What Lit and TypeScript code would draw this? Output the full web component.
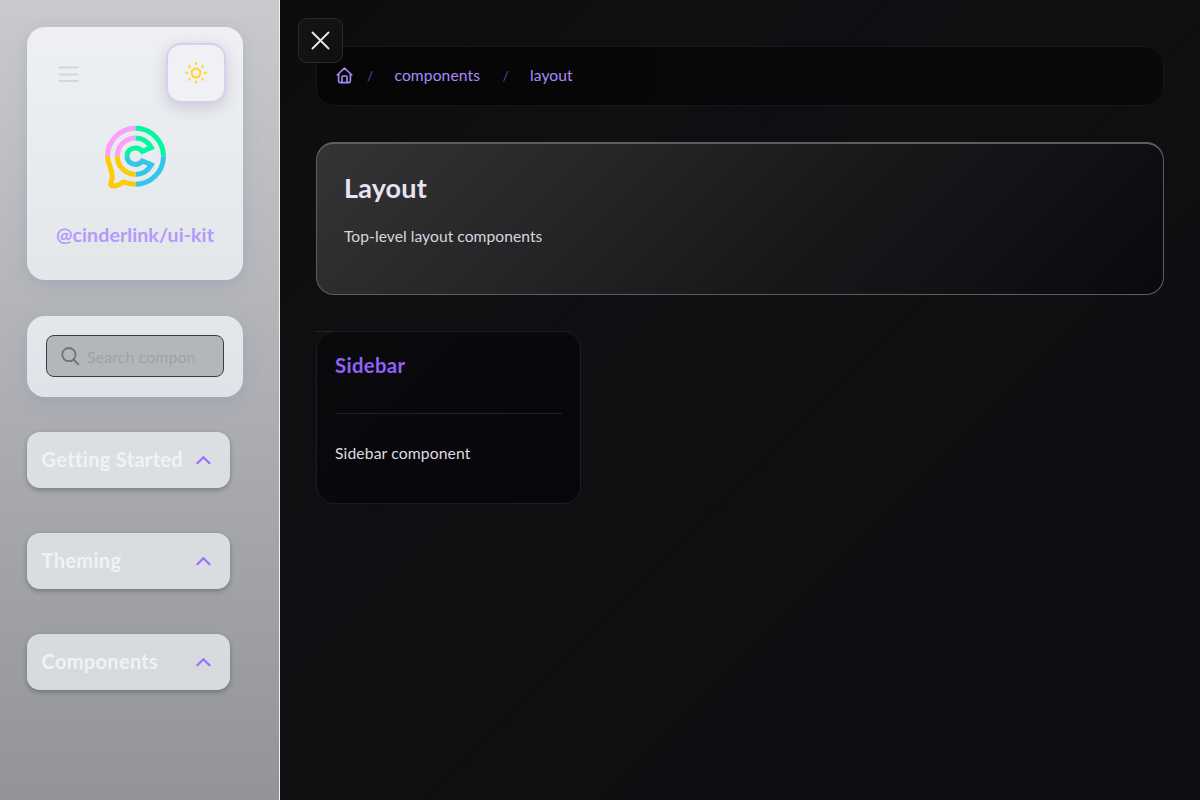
import { LitElement, html, css, svg } from "lit";
import { customElement } from "lit/decorators.js";

@customElement("nav-section")
class NavSection extends LitElement {
  static styles = css`
    :host {
      display: block;
    }
    .section {
      display: flex;
      align-items: center;
      justify-content: space-between;
      box-sizing: border-box;
      width: 203px;
      height: 56px;
      padding: 0 18px 2px 14.6px;
      border-radius: 13px;
      background: rgba(243, 247, 251, 0.68);
      box-shadow: 0 2px 5px rgba(0, 0, 0, 0.28);
    }
    .label {
      font: 700 20px/28px Lato, sans-serif;
      font-variant-ligatures: none;
      letter-spacing: 0.32px;
      color: #f1f2f5;
      white-space: nowrap;
    }
    .chevron {
      display: block;
      flex: none;
      margin-top: 2px;
    }
  `;

  render() {
    return html`<div class="section">
      <span class="label"><slot></slot></span>
      <svg class="chevron" width="17" height="16" viewBox="0 0 17 16" fill="none" stroke="#9a70fb" stroke-width="2.2" stroke-linecap="round">
        <path d="M2.3 11.2 8.4 5.2 14.5 11.2" />
      </svg>
    </div>`;
  }
}

@customElement("app-root")
class AppRoot extends LitElement {
  static styles = css`
    :host {
      display: block;
      height: 800px;
      font-family: Lato, sans-serif;
      font-variant-ligatures: none;
    }
    .page {
      display: flex;
      height: 800px;
      overflow: hidden;
    }
    .side {
      box-sizing: border-box;
      width: 280px;
      flex: none;
      padding: 27px 0 0 27px;
      border-right: 1px solid #f0f0f3;
      background: linear-gradient(180deg, #c9cacd 0%, #b3b4b8 40%, #a0a1a5 75%, #939498 100%);
    }
    .brand {
      display: flex;
      flex-direction: column;
      align-items: center;
      box-sizing: border-box;
      width: 216px;
      height: 253px;
      padding-top: 16px;
      border-radius: 18px;
      background: linear-gradient(180deg, #eef0f4, #e3e7ea);
      box-shadow: 0 5px 16px rgba(125, 140, 175, 0.3);
    }
    .tools {
      display: flex;
      justify-content: space-between;
      align-self: stretch;
      padding: 0 17px 0 31px;
    }
    .menu {
      margin-top: 22px;
    }
    .theme {
      display: grid;
      place-items: center;
      box-sizing: border-box;
      width: 60px;
      height: 60px;
      border: 2px solid #dccdf0;
      border-radius: 15px;
      background: #f0f1f5;
      box-shadow: 0 5px 16px rgba(90, 95, 120, 0.24);
    }
    .logo {
      margin-top: 21px;
    }
    .name {
      margin-top: 31px;
      font-weight: 700;
      font-size: 19.6px;
      line-height: 28px;
      letter-spacing: 0.06px;
      color: #b39afb;
      white-space: nowrap;
    }
    .search {
      box-sizing: border-box;
      width: 216px;
      height: 81px;
      margin-top: 36px;
      padding: 19px;
      border-radius: 18px;
      background: linear-gradient(180deg, #e4e8eb, #dfe3e8);
      box-shadow: 0 5px 16px rgba(125, 140, 175, 0.3);
    }
    .field {
      display: flex;
      align-items: center;
      gap: 7px;
      box-sizing: border-box;
      width: 178px;
      height: 42px;
      padding-left: 14px;
      border: 1px solid #333e4f;
      border-radius: 8px;
      background: #b3b7b9;
      font-size: 15.8px;
      letter-spacing: 0.16px;
      color: #9ca2ac;
      white-space: nowrap;
    }
    .sections {
      display: flex;
      flex-direction: column;
      gap: 45px;
      margin-top: 35px;
    }
    .main {
      position: relative;
      box-sizing: border-box;
      flex: 1;
      padding: 46px 36px 0 36px;
      background: linear-gradient(135deg, #0c0c0c 0%, #0f0f10 18%, #100e12 35%, #0f0f10 55%, #100d12 75%, #0e0e12 100%);
    }
    .close {
      position: absolute;
      left: 18px;
      top: 18px;
      display: flex;
      box-sizing: border-box;
      width: 45px;
      height: 45px;
      padding: 11px;
      border: 1px solid #2a2a2a;
      border-radius: 9px;
      background: linear-gradient(135deg, #151515, #0f0f0f);
    }
    .crumbs {
      display: flex;
      align-items: center;
      box-sizing: border-box;
      height: 60px;
      padding: 0 0 2px 19px;
      border: 1px solid #151517;
      border-radius: 18px;
      background: linear-gradient(100deg, #050505, #09080b 80%);
      font-size: 15.6px;
      letter-spacing: 0.12px;
      color: #a78bfa;
    }
    .slash {
      font-size: 14px;
      color: #5e479d;
    }
    .slash-a {
      margin: 0 21px 0 14px;
    }
    .slash-b {
      margin: 0 21px 0 22.4px;
    }
    .hero {
      box-sizing: border-box;
      height: 153px;
      margin-top: 36px;
      padding: 28px 27px;
      border: 1px solid #5e5e60;
      border-top-width: 2px;
      border-radius: 18px;
      background: linear-gradient(135deg, #343434 0%, #252527 32%, #17171a 60%, #121014 80%, #0b0810 100%);
    }
    .title {
      margin: 0;
      font-weight: 700;
      font-size: 27px;
      line-height: 32px;
      letter-spacing: 0.15px;
      color: #e9e2f2;
    }
    .lead {
      margin: 20px 0 0;
      font-size: 15.6px;
      line-height: 24px;
      letter-spacing: 0.06px;
      color: #d9d5de;
    }
    .list {
      width: 265px;
      margin-top: 36px;
      background: linear-gradient(90deg, #262629, #131316) top / 100% 1px no-repeat;
    }
    .card {
      box-sizing: border-box;
      width: 265px;
      height: 173px;
      padding: 19px 18px 0;
      border: 1px solid #1d1c22;
      border-radius: 18px;
      background: linear-gradient(135deg, #0a0a0b, #09070d 50%, #08060c);
    }
    .card-title {
      margin: 0;
      padding-bottom: 34px;
      border-bottom: 1px solid #222126;
      font-weight: 700;
      font-size: 20.3px;
      line-height: 28px;
      letter-spacing: 0.35px;
      color: #8f63fb;
    }
    .card-text {
      margin: 27px 0 0;
      font-size: 15.7px;
      line-height: 24px;
      letter-spacing: 0.12px;
      color: #dddce0;
    }
  `;

  render() {
    const rays = [0, 45, 90, 135, 180, 225, 270, 315];
    return html`<div class="page">
      <aside class="side">
        <div class="brand">
          <div class="tools">
            <svg class="menu" width="22" height="18" viewBox="0 0 22 18" stroke="#d2d5d9" stroke-width="2" stroke-linecap="round">
              <path d="M1.5 2.6h18M1.5 9.4h18M1.5 16.1h18" />
            </svg>
            <div class="theme">
              <svg width="24" height="24" viewBox="-12 -12 24 24" fill="none" stroke="#fdd835">
                <circle r="4.4" stroke-width="2.2" />
                ${rays.map((a) => svg`<path d="M0-9.6V-8.9" stroke-width="2.3" stroke-linecap="round" transform="rotate(${a})" />`)}
              </svg>
            </div>
          </div>
          <svg class="logo" width="64" height="66" viewBox="-32.5 -32.2 64 66" fill="none" stroke-width="5">
            <g stroke="#fb9ff8">
              <path d="M-28 0A28 28 0 0 1 0-28M-18.2 0A18.2 18.2 0 0 1 0-18.2" />
            </g>
            <g stroke="#06f7a1">
              <path d="M0-28A28 28 0 0 1 28 0" />
              <path d="M0-18.2A18.2 18.2 0 0 1 15.8-8.6L6.8-4.8A8.6 8.6 0 0 0-8.6 0" />
            </g>
            <g stroke="#35c5ea">
              <path d="M0 28A28 28 0 0 0 28 0" />
              <path d="M0 18.2A18.2 18.2 0 0 0 15.8 8.6L6.8 4.8A8.6 8.6 0 0 1-8.6 0" />
            </g>
            <g stroke="#fccb05">
              <path d="M-18.2 0A18.2 18.2 0 0 0 0 18.2" />
              <path d="M-28 0C-28 8-23.2 12-23.2 20C-23.2 25.5-26 28.2-24.3 29.3C-20.5 30.5-16 28.7-12.3 25.8C-8.2 27.3-4 28 0 28" />
            </g>
          </svg>
          <div class="name">@cinderlink/ui-kit</div>
        </div>
        <div class="search">
          <div class="field">
            <svg width="19" height="20" viewBox="0 0 19 20" fill="none" stroke="#69727f" stroke-width="1.8" stroke-linecap="round">
              <circle cx="7.9" cy="8.6" r="6.6" />
              <path d="M12.6 13.5 17.4 18.3" />
            </svg>
            <span>Search compon</span>
          </div>
        </div>
        <nav class="sections">
          <nav-section>Getting Started</nav-section>
          <nav-section>Theming</nav-section>
          <nav-section>Components</nav-section>
        </nav>
      </aside>
      <main class="main">
        <div class="crumbs">
          <svg width="17" height="18" viewBox="0 0 17 18" fill="none" stroke="#a78bfa" stroke-width="1.6" stroke-linejoin="round" stroke-linecap="round">
            <path d="M1.2 9 8.5 2 15.8 9M2.6 8V15Q2.6 16.6 4.2 16.6H12.8Q14.4 16.6 14.4 15V8M6 16.4V11Q6 10 7 10H10Q11 10 11 11V16.4" />
          </svg>
          <span class="slash slash-a">/</span>
          <span>components</span>
          <span class="slash slash-b">/</span>
          <span>layout</span>
        </div>
        <section class="hero">
          <h1 class="title">Layout</h1>
          <p class="lead">Top-level layout components</p>
        </section>
        <div class="list">
          <article class="card">
            <h2 class="card-title">Sidebar</h2>
            <p class="card-text">Sidebar component</p>
          </article>
        </div>
        <div class="close">
          <svg width="21" height="21" viewBox="-0.5 -0.5 21 21" stroke="#e6e6e8" stroke-width="1.9" stroke-linecap="round">
            <path d="M2 2 18 18M18 2 2 18" />
          </svg>
        </div>
      </main>
    </div>`;
  }
}
